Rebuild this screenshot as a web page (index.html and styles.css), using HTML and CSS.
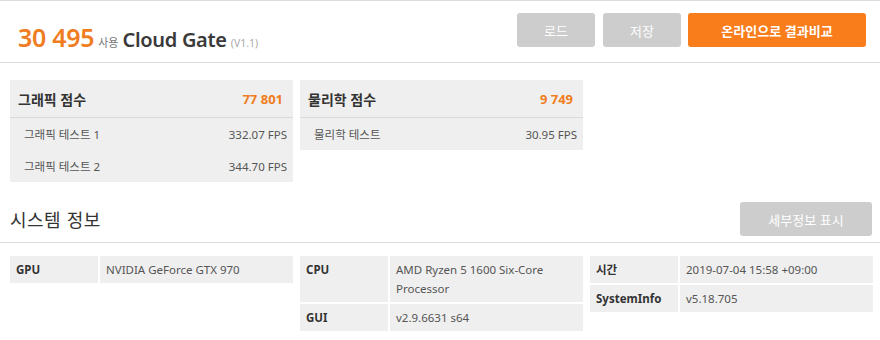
FILE: index.html
```html
<!DOCTYPE html>
<html lang="ko">
<head>
<meta charset="utf-8">
<link rel="stylesheet" href="styles.css">
</head>
<body>
<header class="top">
  <div class="title">
    <span class="score">30 495</span>
    <span class="use">사용</span>
    <span class="name">Cloud Gate</span>
    <span class="ver">(V1.1)</span>
  </div>
  <div class="actions">
    <button class="btn btn-gray btn-sm">로드</button>
    <button class="btn btn-gray btn-sm">저장</button>
    <button class="btn btn-orange">온라인으로 결과비교</button>
  </div>
</header>

<section class="scores">
  <div class="panel">
    <div class="panel-head"><span>그래픽 점수</span><span class="pts">77 801</span></div>
    <div class="panel-row"><span>그래픽 테스트 1</span><span>332.07 FPS</span></div>
    <div class="panel-row"><span>그래픽 테스트 2</span><span>344.70 FPS</span></div>
  </div>
  <div class="panel">
    <div class="panel-head"><span>물리학 점수</span><span class="pts">9 749</span></div>
    <div class="panel-row"><span>물리학 테스트</span><span>30.95 FPS</span></div>
  </div>
</section>

<div class="sys-head">
  <h2>시스템 정보</h2>
  <button class="btn btn-gray btn-detail">세부정보 표시</button>
</div>

<section class="sys">
  <div class="tbl">
    <div class="k">GPU</div><div class="v">NVIDIA GeForce GTX 970</div>
  </div>
  <div class="tbl">
    <div class="k">CPU</div><div class="v">AMD Ryzen 5 1600 Six-Core Processor</div>
    <div class="k">GUI</div><div class="v">v2.9.6631 s64</div>
  </div>
  <div class="tbl">
    <div class="k">시간</div><div class="v">2019-07-04 15:58 +09:00</div>
    <div class="k">SystemInfo</div><div class="v">v5.18.705</div>
  </div>
</section>
</body>
</html>
```
FILE: styles.css
```css
* { box-sizing: border-box; }
body {
  margin: 0;
  width: 880px;
  height: 340px;
  background: #fff;
  font-family: "Noto Sans", "Noto Sans CJK KR", sans-serif;
  color: #333;
  overflow: hidden;
}
.top {
  height: 63px;
  border-top: 1px solid #dcdcdc;
  border-bottom: 1px solid #dcdcdc;
  display: flex;
  align-items: center;
  justify-content: space-between;
  padding: 0 14px 0 18px;
}
.title {
  display: flex;
  align-items: baseline;
  margin-top: 10px;
  white-space: nowrap;
}
.score {
  color: #f07d22;
  font-size: 25px;
  font-weight: 600;
  letter-spacing: -0.3px;
}
.use {
  font-size: 11px;
  color: #777;
  margin: 0 4px 0 4px;
}
.name {
  font-size: 20px;
  font-weight: 600;
  color: #3a3a3a;
  letter-spacing: -0.3px;
}
.ver {
  font-size: 10.5px;
  color: #aaa;
  margin-left: 4px;
}
.actions {
  display: flex;
  gap: 8px;
  margin-top: -3px;
}
.btn {
  border: 0;
  height: 34px;
  border-radius: 3px;
  color: #fff;
  font-family: "Noto Sans CJK KR", sans-serif;
  font-size: 13px;
  padding: 0;
}
.btn-gray { background: #cdcdcd; }
.btn-sm { width: 78px; }
.btn-orange {
  background: #fa7d1c;
  width: 178px;
  font-weight: 700;
  font-size: 13px;
  margin-left: -1px;
}
.scores {
  display: grid;
  grid-template-columns: 283px 283px;
  gap: 7px;
  padding: 17px 10px 0;
  align-items: start;
}
.panel { background: #efefef; }
.panel-head {
  height: 38px;
  border-bottom: 1px solid #dadada;
  display: flex;
  align-items: center;
  justify-content: space-between;
  padding: 0 10px 0 8px;
  font-size: 14px;
  font-weight: 700;
  color: #333;
}
.pts { color: #f07d22; font-size: 13px; }
.panel-row {
  height: 32px;
  display: flex;
  align-items: center;
  justify-content: space-between;
  padding: 0 6px 0 14px;
  font-size: 11.5px;
  color: #555;
}
.sys-head {
  display: flex;
  justify-content: space-between;
  align-items: center;
  padding: 20px 8px 6px 10px;
  border-bottom: 1px solid #dcdcdc;
}
.sys-head h2 {
  margin: 0;
  font-size: 18px;
  font-weight: 400;
  letter-spacing: 0.5px;
  color: #333;
  font-family: "Noto Sans CJK KR", sans-serif;
}
.btn-detail { width: 132px; font-size: 13px; }
.sys {
  display: grid;
  grid-template-columns: repeat(3, 283px);
  gap: 7px;
  padding: 13px 10px 0;
  align-items: start;
}
.tbl {
  display: grid;
  grid-template-columns: 88px 1fr;
  gap: 2px;
}
.k, .v {
  background: #efefef;
  font-size: 11.5px;
  line-height: 19px;
  padding: 4px 6px 4px;
}
.k { font-weight: 700; color: #333; }
.v { color: #555; }
```
